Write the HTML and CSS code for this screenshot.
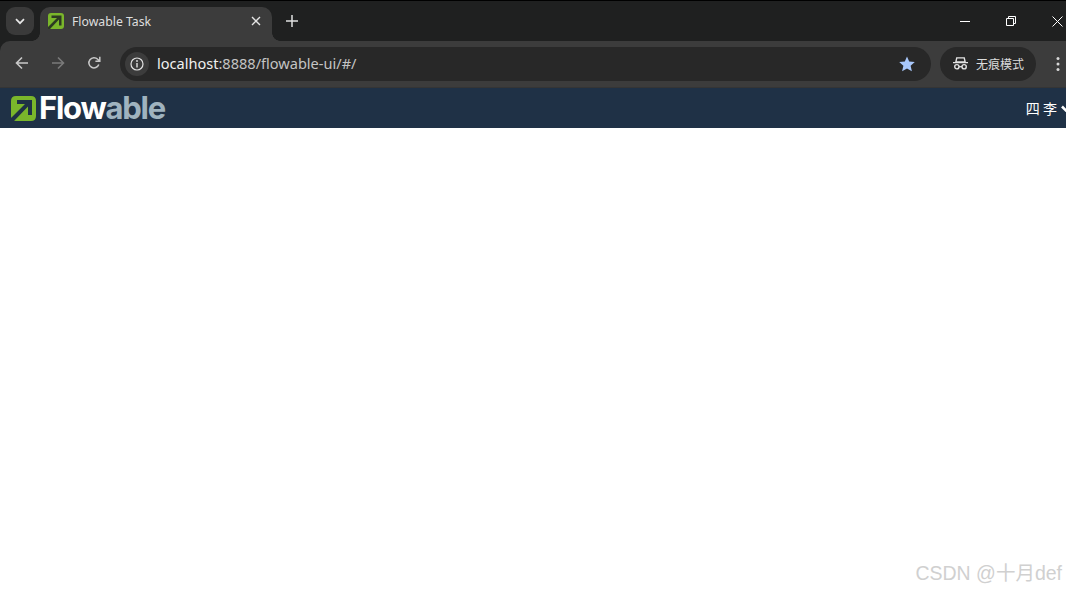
FILE: index.html
```html
<!DOCTYPE html>
<html lang="zh">
<head>
<meta charset="utf-8">
<title>Flowable Task</title>
<link rel="stylesheet" href="styles.css">
</head>
<body>
<div class="tabstrip">
  <div class="tab-search">
    <svg width="10" height="7" viewBox="0 0 10 7"><path d="M1 1.2 5 5.2 9 1.2" fill="none" stroke="#e6e6e6" stroke-width="1.7"/></svg>
  </div>
  <div class="tab">
    <svg class="favicon" width="16" height="16" viewBox="0 0 16 16"><path d="M3 0H13Q16 0 16 3V13Q16 16 13 16H3Q0 16 0 13V3Q0 0 3 0Z" fill="#7ab62b"/><path d="M3.500 2.500H13.500V12.500H11V6.500L2 16H0V14L9 5H3.500Z" fill="#2c3a22"/></svg>
    <span class="tab-title">Flowable Task</span>
    <svg class="tab-close" width="10" height="10" viewBox="0 0 10 10"><path d="M1 1 9 9M9 1 1 9" stroke="#e4e4e4" stroke-width="1.4"/></svg>
  </div>
  <svg class="new-tab" width="12" height="12" viewBox="0 0 12 12"><path d="M6 0V12M0 6H12" stroke="#e0e0e0" stroke-width="1.5"/></svg>
  <div class="window-controls">
    <svg width="10" height="10" viewBox="0 0 10 10"><path d="M0 5.5H10" stroke="#fff" stroke-width="1"/></svg>
    <svg width="10" height="10" viewBox="0 0 10 10"><path d="M.5 2.5H7.5V9.5H.5ZM2.5 2.5V.5H9.5V7.5H7.5" fill="none" stroke="#fff" stroke-width="1"/></svg>
    <svg width="11" height="11" viewBox="0 0 11 11"><path d="M.5 .5 10.5 10.5M10.5 .5 .5 10.5" stroke="#fff" stroke-width="1"/></svg>
  </div>
</div>
<div class="toolbar">
  <svg class="nav" width="14" height="14" viewBox="0 0 14 14"><path d="M13 7H2M7 1.5 1.5 7 7 12.500" fill="none" stroke="#c8c8c8" stroke-width="1.600"/></svg>
  <svg class="nav" width="14" height="14" viewBox="0 0 14 14"><path d="M1 7H12M7 1.500 12.500 7 7 12.500" fill="none" stroke="#7a7a7a" stroke-width="1.600"/></svg>
  <svg class="nav" width="14" height="14" viewBox="0 0 14 14"><path d="M11.800 8.500A5.100 5.100 0 1 1 10.700 3.300L12.500 5M12.800 .8V5.200H8.400" fill="none" stroke="#c8c8c8" stroke-width="1.500"/></svg>
  <div class="omnibox">
    <div class="info-chip">
      <svg width="14" height="14" viewBox="0 0 14 14"><circle cx="7" cy="7" r="6" fill="none" stroke="#e2e2e2" stroke-width="1.200"/><path d="M7 6V10.500" stroke="#e2e2e2" stroke-width="1.400"/><circle cx="7" cy="4" r=".9" fill="#e2e2e2"/></svg>
    </div>
    <span class="url"><span class="url-host">localhost</span>:8888/flowable-ui/#/</span>
    <svg class="star" width="16" height="16" viewBox="0 0 16 16"><path d="M8 .5 10.200 5.600 15.800 6.100 11.600 9.800 12.900 15.300 8 12.400 3.100 15.300 4.400 9.800 .2 6.100 5.800 5.600Z" fill="#a8c7fa"/></svg>
  </div>
  <div class="incognito">
    <svg width="15" height="13" viewBox="0 0 14 12"><path d="M3.500 .7H10.500L11.300 4.500H2.700ZM0 5.200H14" fill="none" stroke="#e2e2e2" stroke-width="1.300"/><circle cx="3.600" cy="9" r="2" fill="none" stroke="#e2e2e2" stroke-width="1.300"/><circle cx="10.400" cy="9" r="2" fill="none" stroke="#e2e2e2" stroke-width="1.300"/><path d="M5.600 9H8.400" stroke="#e2e2e2" stroke-width="1.200"/></svg>
    <span>无痕模式</span>
  </div>
  <svg class="menu" width="4" height="16" viewBox="0 0 4 16"><circle cx="2" cy="2.500" r="1.500" fill="#d8d8d8"/><circle cx="2" cy="8" r="1.500" fill="#d8d8d8"/><circle cx="2" cy="13.500" r="1.500" fill="#d8d8d8"/></svg>
</div>
<header class="app-header">
  <div class="brand">
    <svg width="25" height="25" viewBox="0 0 25 25"><path d="M5 0H20Q25 0 25 5V20Q25 25 20 25H5Q0 25 0 20V5Q0 0 5 0Z" fill="#7ab62b"/><path d="M6 4H21V19H17V10.500L3 25H0V22L14 8H6Z" fill="#1f3146"/></svg>
    <span class="wordmark">Flow<span class="wordmark-accent">able</span></span>
  </div>
  <div class="user">
    <span class="user-name">四 李</span>
    <svg width="10" height="7" viewBox="0 0 10 7"><path d="M1 1.500 5 5.500 9 1.500" fill="none" stroke="#fff" stroke-width="2.600"/></svg>
  </div>
</header>
<main class="page">
  <div class="watermark">CSDN @十月def</div>
</main>
</body>
</html>
```
FILE: styles.css
```css
* { box-sizing: border-box; }
html, body { margin: 0; height: 100%; overflow: hidden; }
body {
  background: #1f2020;
  font-family: "Noto Sans", "Noto Sans CJK SC", sans-serif;
  display: flex;
  flex-direction: column;
}

.tabstrip {
  height: 41px;
  flex: none;
  background: #1f2020;
  border-top: 1px solid #000;
  display: flex;
  align-items: flex-start;
  padding: 6px 0 0 6px;
}
.tab-search {
  width: 28px;
  height: 28px;
  border-radius: 9px;
  background: #3a3a3a;
  display: flex;
  align-items: center;
  justify-content: center;
}
.tab {
  position: relative;
  width: 232px;
  height: 34px;
  margin-left: 6px;
  background: #3c3c3c;
  border-radius: 10px 10px 0 0;
  display: flex;
  align-items: center;
  padding: 0 11px 6px 8px;
}
.tab::before,
.tab::after {
  content: "";
  position: absolute;
  bottom: 0;
  width: 8px;
  height: 8px;
}
.tab::before {
  left: -8px;
  background: radial-gradient(circle at 0 0, transparent 7.5px, #3c3c3c 8px);
}
.tab::after {
  right: -8px;
  background: radial-gradient(circle at 100% 0, transparent 7.5px, #3c3c3c 8px);
}
.tab-title {
  margin-left: 8px;
  font: 12.25px "Noto Sans", sans-serif;
  color: #dedede;
  flex: 1;
}
.new-tab { margin: 8px 0 0 14px; }
.window-controls {
  margin-left: auto;
  display: flex;
  align-items: center;
  gap: 36px;
  height: 28px;
  margin-right: 3px;
}

.toolbar {
  height: 47px;
  flex: none;
  background: #3c3c3c;
  border-radius: 10px 0 0 0;
  display: flex;
  align-items: center;
  padding: 0 6px 1px 15px;
  border-bottom: 1px solid #353535;
}
.nav { margin-right: 22px; flex: none; position: relative; top: -1px; }
.nav:nth-child(3) { margin-right: 19px; }
.omnibox {
  width: 811px;
  height: 34px;
  border-radius: 17px;
  background: #282828;
  display: flex;
  align-items: center;
  padding: 0 16px 0 5px;
}
.info-chip {
  width: 24px;
  height: 24px;
  border-radius: 50%;
  background: #3c3c3c;
  display: flex;
  align-items: center;
  justify-content: center;
}
.url {
  margin: 0 0 2px 8px;
  font: 14.56px "Noto Sans", sans-serif;
  color: #c4c4c4;
  flex: 1;
}
.url-host { color: #f0f0f0; }
.incognito {
  width: 96px;
  height: 34px;
  margin-left: 9px;
  border-radius: 17px;
  background: #282828;
  display: flex;
  align-items: center;
  gap: 8px;
  padding-left: 13px;
  font: 12px "Noto Sans CJK SC", sans-serif;
  color: #dcdcdc;
}
.menu { margin-left: 20px; flex: none; }

.app-header {
  height: 40px;
  flex: none;
  background: #1f3146;
  display: flex;
  align-items: center;
  justify-content: space-between;
}
.brand { display: flex; align-items: center; margin-left: 11px; }
.wordmark {
  margin-left: 3px;
  font: 700 31px/40px Inter, sans-serif;
  letter-spacing: -1.25px;
  color: #fff;
}
.wordmark-accent { color: #9fb3bf; }
.user {
  display: flex;
  align-items: center;
  gap: 4px;
  margin-right: -5px;
  color: #fff;
}
.user-name { font: 14px "Noto Sans CJK SC", sans-serif; }

.page {
  flex: 1;
  background: #fff;
  display: flex;
  align-items: flex-end;
  justify-content: flex-end;
  padding: 0 4px 4px 0;
}
.watermark {
  font: 19.5px "Liberation Sans", "Noto Sans CJK SC", sans-serif;
  color: #d0d0d0;
}
```
